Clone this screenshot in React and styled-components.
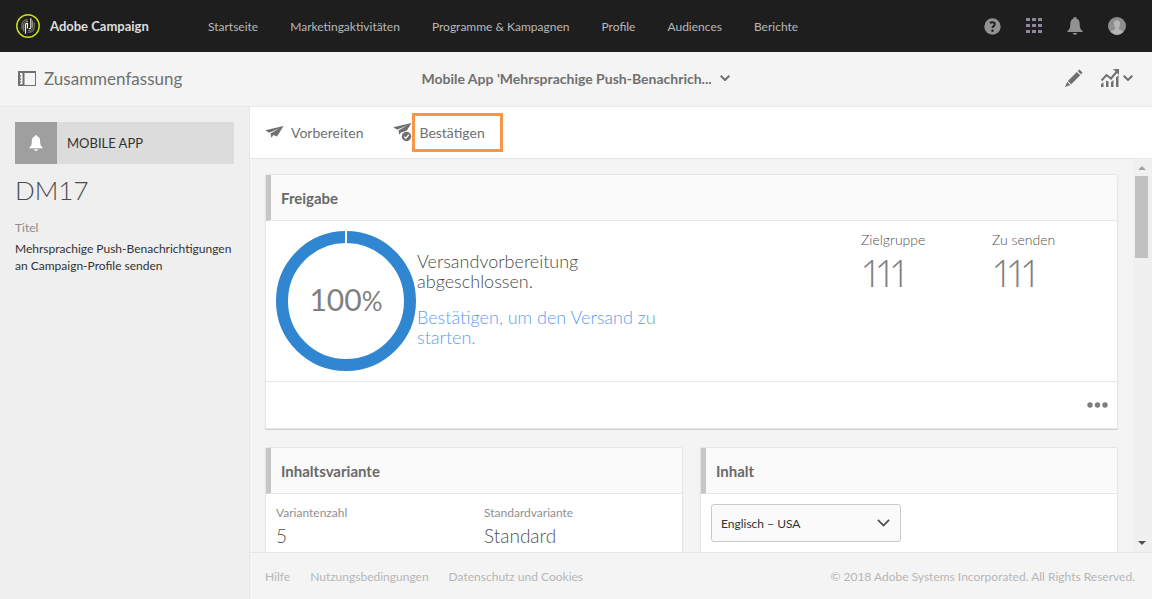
import React from "react";
import styled, { createGlobalStyle } from "styled-components";

const GlobalStyle = createGlobalStyle`
  *, *::before, *::after { box-sizing: border-box; }
  body {
    margin: 0;
    background: #f4f4f4;
    color: #4b4b4b;
    font-family: Lato, "Liberation Sans", sans-serif;
    font-size: 12px;
  }
  h1, h2, p, dl, dt, dd { margin: 0; }
  a { color: inherit; text-decoration: none; }
  button, select { font: inherit; color: inherit; }
  svg { display: block; flex: none; }
`;

const Page = styled.div`
  display: flex;
  flex-direction: column;
  height: 100vh;
`;

const TopBar = styled.header`
  display: flex;
  align-items: center;
  flex: none;
  height: 52px;
  padding: 0 26px 0 16px;
  background: #1e1e1e;
  color: #b9b9b9;
`;

const Brand = styled.a`
  display: flex;
  align-items: center;
  gap: 10px;
  width: 192px;
  color: #dedede;
  font-size: 13px;
  font-weight: 700;
`;

const MainNav = styled.nav`
  display: flex;
  gap: 32px;
  flex: 1;
`;

const TopActions = styled.div`
  display: flex;
  align-items: center;
  gap: 25px;
`;

const IconButton = styled.button`
  display: flex;
  align-items: center;
  gap: 4px;
  padding: 0;
  border: 0;
  background: none;
  color: ${(p) => p.$color || "#707070"};
`;

const TitleBar = styled.div`
  display: grid;
  grid-template-columns: 1fr auto 1fr;
  align-items: center;
  flex: none;
  height: 55px;
  padding: 0 19px 2px 18px;
  border-bottom: 1px solid #e6e6e6;
  color: #707070;
`;

const PageTitle = styled.h1`
  display: flex;
  align-items: center;
  gap: 8px;
  font-size: 17px;
  font-weight: 400;
`;

const TitleMenu = styled(IconButton)`
  gap: 8px;
  font-size: 14px;
  font-weight: 700;
`;

const TitleActions = styled.div`
  display: flex;
  justify-content: flex-end;
  gap: 18px;
`;

const Workspace = styled.div`
  display: flex;
  flex: 1;
  min-height: 0;
`;

const Sidebar = styled.aside`
  flex: none;
  width: 250px;
  padding: 15px;
  border-right: 1px solid #e6e6e6;
  background: #efefef;
`;

const ChannelBadge = styled.div`
  display: flex;
  align-items: center;
  height: 42px;
  background: #dcdcdc;
  color: #323232;
  font-size: 13px;
`;

const ChannelIcon = styled.span`
  display: grid;
  place-items: center;
  width: 42px;
  height: 42px;
  margin-right: 10px;
  background: #9f9f9f;
  color: #ffffff;
`;

const DeliveryId = styled.h2`
  margin-top: 10px;
  font-size: 26px;
  font-weight: 300;
  line-height: 32px;
`;

const FieldName = styled.dt`
  margin-top: 14px;
  color: #8c8c8c;
  line-height: 16px;
`;

const FieldValue = styled.dd`
  margin-top: 4px;
  color: #323232;
  line-height: 17px;
`;

const Content = styled.div`
  display: flex;
  flex-direction: column;
  flex: 1;
  min-width: 0;
`;

const Toolbar = styled.div`
  display: flex;
  align-items: center;
  flex: none;
  gap: 30px;
  height: 52px;
  padding: 0 15px;
  border-bottom: 1px solid #e6e6e6;
  background: #ffffff;
`;

const ToolButton = styled(IconButton)`
  gap: ${(p) => (p.$marked ? "0" : "7px")};
  font-size: 14px;
`;

const Marked = styled.span`
  height: 39px;
  padding: 0 15px 0 4px;
  border: 3px solid #f79646;
  line-height: 34px;
`;

const ScrollPane = styled.div`
  display: flex;
  flex: 1;
  min-height: 0;
  overflow: hidden;
`;

const Cards = styled.main`
  display: grid;
  grid-template-columns: 1fr 1fr;
  grid-auto-rows: max-content;
  align-content: start;
  gap: 18px 17px;
  flex: 1;
  min-width: 0;
  padding: 15px;
`;

const Card = styled.section`
  grid-column: ${(p) => (p.$wide ? "1 / -1" : "auto")};
  min-height: 160px;
  border: 1px solid #e6e6e6;
  border-radius: 2px;
  background: #ffffff;
  box-shadow: 0 1px 1px #cfcfcf;
`;

const CardTitle = styled.h2`
  height: 46px;
  padding-left: 10px;
  border-left: 5px solid #c6c6c6;
  border-bottom: 1px solid #e6e6e6;
  background: #fafafa;
  color: #696969;
  font-size: 15px;
  font-weight: 700;
  line-height: 46px;
`;

const StatusBody = styled.div`
  display: flex;
  padding: 10px 0 10px 10px;
`;

const Ring = styled.div`
  display: grid;
  flex: none;
  place-items: center;
  width: 140px;
  height: 140px;
  & > * { grid-area: 1 / 1; }
`;

const Percent = styled.span`
  padding-bottom: 5px;
  color: #808080;
  font-size: 30px;
  small { font-size: 26px; }
`;

const StatusText = styled.div`
  display: grid;
  align-content: center;
  gap: 16px;
  width: 250px;
  padding: 0 0 4px 1px;
  font-size: 18px;
  font-weight: 300;
  line-height: 20px;
`;

const StatusLink = styled.a`
  color: #5c9df5;
`;

const Metrics = styled.dl`
  display: grid;
  grid-template-columns: 131px 125px;
  margin-left: auto;
`;

const MetricName = styled.dt`
  color: #505050;
  font-size: 14px;
  font-weight: 300;
  line-height: 18px;
`;

const MetricValue = styled.dd`
  padding-left: 2px;
  color: #808080;
  font-size: 38px;
  font-weight: 300;
  font-variant-numeric: proportional-nums;
  line-height: 46px;
`;

const CardFooter = styled.div`
  display: flex;
  align-items: center;
  justify-content: flex-end;
  height: 47px;
  padding-right: 9px;
  border-top: 1px solid #e6e6e6;
`;

const Facts = styled.dl`
  display: grid;
  grid-template-columns: 1fr 1fr;
  padding-top: 10px;
`;

const Fact = styled.div`
  padding-left: 10px;
`;

const FactName = styled.dt`
  color: #909090;
  line-height: 18px;
`;

const FactValue = styled.dd`
  color: #505050;
  font-size: 19px;
  font-weight: 300;
  line-height: 28px;
`;

const SelectField = styled.label`
  display: block;
  position: relative;
  width: 190px;
  margin: 10px;
  svg { position: absolute; top: 15px; right: 11px; pointer-events: none; }
`;

const Select = styled.select`
  width: 100%;
  height: 38px;
  padding: 0 9px;
  appearance: none;
  border: 1px solid #cacaca;
  border-radius: 3px;
  background: #fafafa;
  color: #323232;
`;

const ScrollTrack = styled.div`
  display: flex;
  flex-direction: column;
  align-items: center;
  flex: none;
  width: 19px;
  padding: 7px 4px 7px 2px;
  background: #f0f0f0;
`;

const Thumb = styled.div`
  width: 13px;
  height: 82px;
  margin: 6px 0 auto;
  background: #c1c1c1;
`;

const Footer = styled.footer`
  display: flex;
  align-items: center;
  flex: none;
  gap: 20px;
  height: 47px;
  padding: 0 17px 0 15px;
  border-top: 1px solid #e6e6e6;
  color: #b6b6b6;
`;

const Copyright = styled.span`
  margin-left: auto;
`;

const Logo = () => (
  <svg width="24" height="24" viewBox="0 0 24 24" fill="none">
    <circle cx="12" cy="12" r="11.2" stroke="#c8dc1e" strokeWidth="1.5" />
    <path d="M6 15.500v-5c0-3 2-4.700 5-4.700h1M7.700 17.500v-7c0-1.900 1.200-3 3.300-3h1M18.200 8.500v5c0 3-2 4.700-5 4.700h-1M16.500 6.500v7c0 1.900-1.200 3-3.300 3h-1" stroke="#8f917c" strokeWidth="1" />
    <path d="M9.500 19.800V10.500c0-.8.500-1.200 1.300-1.200h.7v5.200" stroke="#f0f2d8" strokeWidth="1.200" />
    <path d="M14.800 4.200v9.300c0 .8-.5 1.200-1.300 1.200h-.7" stroke="#f0f2d8" strokeWidth="1.200" />
  </svg>
);

const Chevron = ({ w = 10, sw = 2 }) => (
  <svg width={w} height={w * 0.6} viewBox="0 0 10 6" fill="none" stroke="currentColor" strokeWidth={sw}>
    <path d="M.7.7 5 5 9.300.7" />
  </svg>
);

const Bell = ({ w = 16, h = 18 }) => (
  <svg width={w} height={h} viewBox="0 0 16 18" fill="currentColor">
    <path d="M8 0C6.800 0 6.200.8 6.200 1.700 4 2.500 3.300 4.500 3.300 7c0 4-1 5.700-2.900 7v1h15.200v-1c-1.900-1.300-2.900-3-2.900-7 0-2.500-.7-4.500-2.900-5.300C9.800.8 9.200 0 8 0ZM5.700 16h4.600c-.3 1.200-1.200 1.800-2.300 1.800S6 17.200 5.700 16Z" />
  </svg>
);

const Help = () => (
  <svg width="17" height="17" viewBox="0 0 17 17">
    <circle cx="8.500" cy="8.500" r="8.200" fill="#919191" />
    <path d="M5.900 5.200C6.500 4.600 7.400 4.200 8.400 4.200c1.500 0 2.400.8 2.400 2 0 1.900-2.300 1.900-2.300 3.900" fill="none" stroke="#1e1e1e" strokeWidth="1.900" />
    <circle cx="8.500" cy="12.700" r="1.200" fill="#1e1e1e" />
  </svg>
);

const AppGrid = () => (
  <svg width="16" height="16" viewBox="0 0 16 16" fill="#8f86a0">
    {[0, 6, 12].map((y) => [0, 6, 12].map((x) => <rect key={`${x}-${y}`} x={x} y={y} width="4" height="3" />))}
  </svg>
);

const Avatar = () => (
  <svg width="18" height="18" viewBox="0 0 18 18">
    <circle cx="9" cy="9" r="9" fill="#8e8e8e" />
    <path d="M9 3.200c2 0 3.200 1.400 3.200 3.500 0 1.600-.6 2.800-1.300 3.600v1.700c.3.900 3 1.200 4.300 2.500A9 9 0 0 1 9 18a9 9 0 0 1-6.200-3.500c1.300-1.300 4-1.600 4.300-2.500v-1.700C6.400 9.500 5.800 8.300 5.800 6.700c0-2.100 1.200-3.500 3.200-3.500Z" fill="#b5b5b5" />
  </svg>
);

const PanelIcon = () => (
  <svg width="18" height="15" viewBox="0 0 18 15" fill="none" stroke="currentColor">
    <rect x=".5" y=".5" width="17" height="14" />
    <path d="M0 1h18M5.500 1v14" strokeWidth="2" />
    <path d="M0 5h3M0 8h3M0 11h3M0 14h5" strokeWidth="1.500" />
    <path d="M1 1v14" strokeWidth="2" />
  </svg>
);

const Pencil = () => (
  <svg width="18" height="18" viewBox="0 0 18 18" fill="currentColor">
    <path d="M14.500 0.500 17.500 3.500 16 5.400 12.700 2.100ZM11.900 2.900 15.200 6.200 6.200 15.200 2.900 11.900ZM2.200 12.700 5.400 15.900 0 18Z" />
  </svg>
);

const Report = () => (
  <svg width="18" height="18" viewBox="0 0 18 18" fill="currentColor">
    <path d="M0 15l2.500-1.800V18H0ZM5 11.500l2.500 1V18H5ZM10 13l2.500-2V18H10ZM15 8.500 17.500 6V18H15Z" />
    <path d="M.5 11.500 5.500 6l4.500 3.500 5.500-6.500" fill="none" stroke="currentColor" strokeWidth="2" />
    <path d="M12 0h6v6Z" />
  </svg>
);

const Plane = ({ checked }) => (
  <svg width="19" height="19" viewBox="0 0 19 19" fill="currentColor">
    <g transform={checked ? "translate(0 -3)" : undefined}>
      <path d="M18.500 3 .3 7.300 4.200 9.700 14.500 5.200 5.500 10.400 6.300 14.800 8.500 11.900 12 13.500Z" />
    </g>
    {checked && (
      <>
        <circle cx="13.500" cy="13.500" r="5.700" fill="#ffffff" />
        <circle cx="13.500" cy="13.500" r="4.700" />
        <path d="m11.300 13.600 1.600 1.700 2.900-3.600" fill="none" stroke="#ffffff" strokeWidth="1.300" />
      </>
    )}
  </svg>
);

const ProgressRing = () => (
  <svg width="140" height="140" viewBox="0 0 140 140">
    <circle cx="70" cy="70" r="64" fill="none" stroke="#3186d2" strokeWidth="12" />
    <path d="M70 0v13" stroke="#ffffff" strokeWidth="2" />
  </svg>
);

const More = () => (
  <svg width="21" height="6" viewBox="0 0 21 6" fill="#7d7d7d">
    <circle cx="3" cy="3" r="2.700" />
    <circle cx="10.500" cy="3" r="2.700" />
    <circle cx="18" cy="3" r="2.700" />
  </svg>
);

const ScrollArrow = ({ down }) => (
  <svg width="8" height="4" viewBox="0 0 8 4" fill={down ? "#505050" : "#a3a3a3"}>
    <path d={down ? "M0 0h8L4 4Z" : "M0 4h8L4 0Z"} />
  </svg>
);

const navItems = ["Startseite", "Marketingaktivitäten", "Programme & Kampagnen", "Profile", "Audiences", "Berichte"];
const footerLinks = ["Hilfe", "Nutzungsbedingungen", "Datenschutz und Cookies"];

export default function App() {
  return (
    <>
      <GlobalStyle />
      <Page>
        <TopBar>
          <Brand href="#"><Logo />Adobe Campaign</Brand>
          <MainNav>
            {navItems.map((item) => <a key={item} href="#">{item}</a>)}
          </MainNav>
          <TopActions>
            <IconButton $color="#919191" aria-label="Hilfe"><Help /></IconButton>
            <IconButton $color="#919191" aria-label="Lösungen"><AppGrid /></IconButton>
            <IconButton $color="#919191" aria-label="Benachrichtigungen"><Bell /></IconButton>
            <IconButton aria-label="Benutzer"><Avatar /></IconButton>
          </TopActions>
        </TopBar>

        <TitleBar>
          <PageTitle><PanelIcon />Zusammenfassung</PageTitle>
          <TitleMenu>Mobile App 'Mehrsprachige Push-Benachrich... <Chevron /></TitleMenu>
          <TitleActions>
            <IconButton aria-label="Bearbeiten"><Pencil /></IconButton>
            <IconButton aria-label="Berichte"><Report /><Chevron /></IconButton>
          </TitleActions>
        </TitleBar>

        <Workspace>
          <Sidebar>
            <ChannelBadge><ChannelIcon><Bell w={14} /></ChannelIcon>MOBILE APP</ChannelBadge>
            <DeliveryId>DM17</DeliveryId>
            <dl>
              <FieldName>Titel</FieldName>
              <FieldValue>Mehrsprachige Push-Benachrichtigungen an Campaign-Profile senden</FieldValue>
            </dl>
          </Sidebar>

          <Content>
            <Toolbar>
              <ToolButton><Plane />Vorbereiten</ToolButton>
              <ToolButton $marked><Plane checked /><Marked>Bestätigen</Marked></ToolButton>
            </Toolbar>

            <ScrollPane>
              <Cards>
                <Card $wide>
                  <CardTitle>Freigabe</CardTitle>
                  <StatusBody>
                    <Ring><ProgressRing /><Percent>100<small>%</small></Percent></Ring>
                    <StatusText>
                      <p>Versandvorbereitung abgeschlossen.</p>
                      <StatusLink href="#">Bestätigen, um den Versand zu starten.</StatusLink>
                    </StatusText>
                    <Metrics>
                      <div><MetricName>Zielgruppe</MetricName><MetricValue>111</MetricValue></div>
                      <div><MetricName>Zu senden</MetricName><MetricValue>111</MetricValue></div>
                    </Metrics>
                  </StatusBody>
                  <CardFooter>
                    <IconButton aria-label="Mehr"><More /></IconButton>
                  </CardFooter>
                </Card>
                <Card>
                  <CardTitle>Inhaltsvariante</CardTitle>
                  <Facts>
                    <Fact><FactName>Variantenzahl</FactName><FactValue>5</FactValue></Fact>
                    <Fact><FactName>Standardvariante</FactName><FactValue>Standard</FactValue></Fact>
                  </Facts>
                </Card>
                <Card>
                  <CardTitle>Inhalt</CardTitle>
                  <SelectField>
                    <Select aria-label="Inhalt" defaultValue="en-us">
                      <option value="en-us">Englisch – USA</option>
                    </Select>
                    <Chevron w={13} sw={1.3} />
                  </SelectField>
                </Card>
              </Cards>
              <ScrollTrack aria-hidden="true">
                <ScrollArrow />
                <Thumb />
                <ScrollArrow down />
              </ScrollTrack>
            </ScrollPane>

            <Footer>
              {footerLinks.map((item) => <a key={item} href="#">{item}</a>)}
              <Copyright>© 2018 Adobe Systems Incorporated. All Rights Reserved.</Copyright>
            </Footer>
          </Content>
        </Workspace>
      </Page>
    </>
  );
}
